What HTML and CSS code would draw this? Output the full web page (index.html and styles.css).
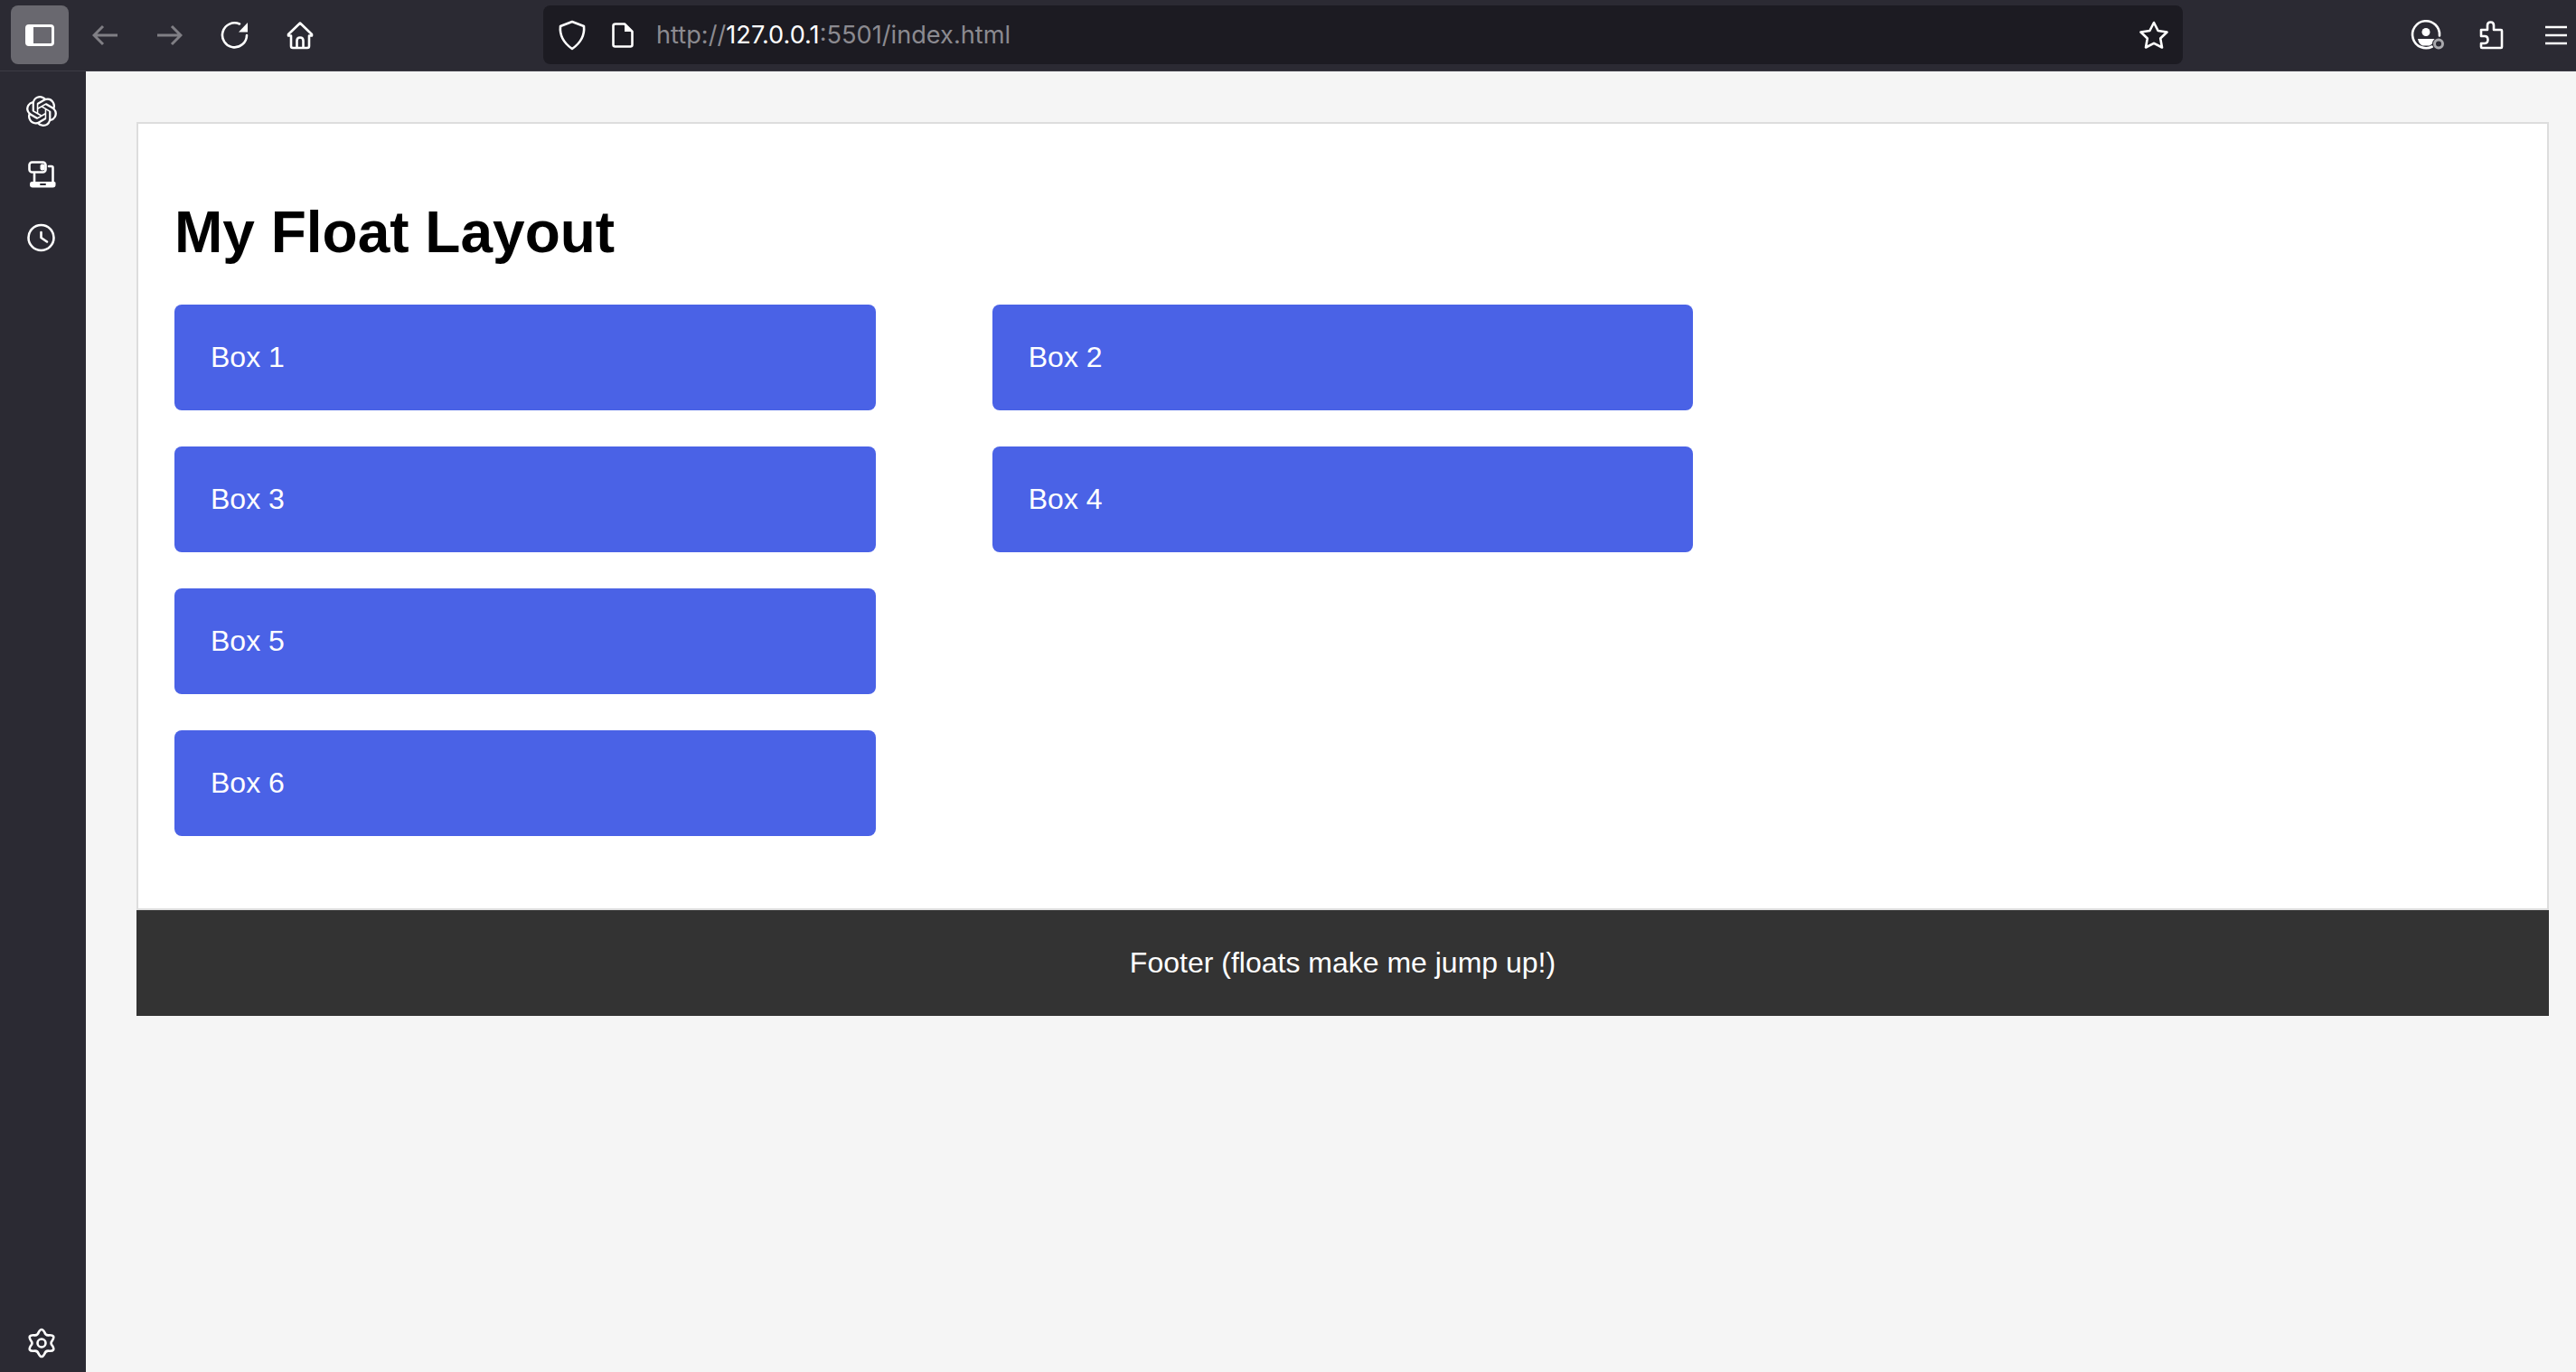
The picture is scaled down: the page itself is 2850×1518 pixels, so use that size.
FILE: index.html
```html
<!DOCTYPE html>
<html lang="en">
<head>
    <meta charset="UTF-8">
    <title>My Float Layout</title>
    <link rel="stylesheet" href="styles.css">
</head>
<body>
    <header class="toolbar">
        <div class="tool-btn tool-btn-active">
            <svg width="32" height="24" viewBox="0 0 32 24"><rect x="1.500" y="1.500" width="29" height="21" rx="2.500" fill="none" stroke="#fff" stroke-width="3"/><rect x="1" y="1" width="8" height="22" rx="2" fill="#fff"/></svg>
        </div>
        <div class="tool-btn">
            <svg width="28" height="24" viewBox="0 0 28 24" class="icon-dim"><path d="M28 12H3M12 2 2 12l10 10"/></svg>
        </div>
        <div class="tool-btn">
            <svg width="28" height="24" viewBox="0 0 28 24" class="icon-dim"><path d="M0 12h25M16 2l10 10-10 10"/></svg>
        </div>
        <div class="tool-btn">
            <svg width="32" height="32" viewBox="0 0 32 32" class="icon"><path d="M29 16A13.500 13.500 0 1 1 21 3.500"/><path d="M30 2v10.500H20z" class="icon-fill"/></svg>
        </div>
        <div class="tool-btn">
            <svg width="32" height="32" viewBox="0 0 32 32" class="icon"><path d="M16 2.500 3 15v1.500h3V28q0 2 2 2h16q2 0 2-2V16.500h3V15zM12.500 30v-8q0-3.500 3.500-3.500t3.500 3.500v8"/></svg>
        </div>

        <div class="urlbar">
            <svg width="32" height="34" viewBox="0 0 32 34" class="icon"><path d="M16 2 29 7q1.500 15-13 25Q1.500 22 3 7z"/></svg>
            <svg width="24" height="28" viewBox="0 0 24 28" class="icon url-page"><path d="M4 1.500h10l8.500 8.500v14.500q0 2-2 2H3.500q-2 0-2-2v-21q0-2 2.500-2z"/><path d="M14 2l8 8h-8z" class="icon-fill"/></svg>
            <span class="url-text">http://<span class="url-host">127.0.0.1</span>:5501/index.html</span>
            <svg width="32" height="32" viewBox="0 0 32 32" class="icon url-star"><path d="M16 2l4.600 9 9.900 1.500-7.300 7 1.800 10-9-4.700-9 4.700 1.800-10-7.300-7L11.400 11z"/></svg>
        </div>

        <div class="tool-btn">
            <svg width="40" height="40" viewBox="0 0 40 40" class="icon"><path d="M27 32.500A15 15 0 1 1 35 20.500"/><circle cx="20" cy="16.500" r="4.500" class="icon-fill"/><path d="M11 24h19q-1 5-6 7.500h-8q-4-2-5-7.500z" class="icon-fill"/><circle cx="34" cy="29.500" r="7" fill="#2b2a33" stroke="none"/><circle cx="34" cy="29.500" r="4.500" fill="none" stroke="#a9a9ad" stroke-width="3"/></svg>
        </div>
        <div class="tool-btn">
            <svg width="28" height="34" viewBox="0 0 28 34" class="icon"><path d="M3 11h7V6q0-3.500 3.500-3.500T17 6v5h8q1 0 1 1v18q0 1-1 1H4q-1 0-1-1v-4h4q3.500 0 3.500-4T7 18H3z"/></svg>
        </div>
        <div class="tool-btn">
            <svg width="24" height="22" viewBox="0 0 24 22" class="icon icon-square"><path d="M0 2h24M0 11h24M0 20h24"/></svg>
        </div>
    </header>

    <div class="app">
        <nav class="sidebar">
            <div class="side-btn">
                <svg width="34" height="34" viewBox="0 0 24 24" fill="#fff"><path d="M22.2819 9.8211a5.9847 5.9847 0 0 0-.5157-4.9108 6.0462 6.0462 0 0 0-6.5098-2.9A6.0651 6.0651 0 0 0 4.9807 4.1818a5.9847 5.9847 0 0 0-3.9977 2.9 6.0462 6.0462 0 0 0 .7427 7.0966 5.98 5.98 0 0 0 .511 4.9107 6.051 6.051 0 0 0 6.5146 2.9001A5.9847 5.9847 0 0 0 13.2599 24a6.0557 6.0557 0 0 0 5.7718-4.2058 5.9894 5.9894 0 0 0 3.9977-2.9001 6.0557 6.0557 0 0 0-.7475-7.0729zm-9.022 12.6081a4.4755 4.4755 0 0 1-2.8764-1.0408l.1419-.0804 4.7783-2.7582a.7948.7948 0 0 0 .3927-.6813v-6.7369l2.02 1.1686a.071.071 0 0 1 .038.052v5.5826a4.504 4.504 0 0 1-4.4945 4.4944zm-9.6607-4.1254a4.4708 4.4708 0 0 1-.5346-3.0137l.142.0852 4.783 2.7582a.7712.7712 0 0 0 .7806 0l5.8428-3.3685v2.3324a.0804.0804 0 0 1-.0332.0615L9.74 19.9502a4.4992 4.4992 0 0 1-6.1408-1.6464zM2.3408 7.8956a4.485 4.485 0 0 1 2.3655-1.9728V11.6a.7664.7664 0 0 0 .3879.6765l5.8144 3.3543-2.0201 1.1685a.0757.0757 0 0 1-.071 0l-4.8303-2.7865A4.504 4.504 0 0 1 2.3408 7.872zm16.5963 3.8558L13.1038 8.364 15.1192 7.2a.0757.0757 0 0 1 .071 0l4.8303 2.7913a4.4944 4.4944 0 0 1-.6765 8.1042v-5.6772a.79.79 0 0 0-.407-.667zm2.0107-3.0231l-.142-.0852-4.7735-2.7818a.7759.7759 0 0 0-.7854 0L9.409 9.2297V6.8974a.0662.0662 0 0 1 .0284-.0615l4.8303-2.7866a4.4992 4.4992 0 0 1 6.6802 4.66zM8.3065 12.863l-2.02-1.1638a.0804.0804 0 0 1-.038-.0567V6.0742a4.4992 4.4992 0 0 1 7.3757-3.4537l-.142.0805L8.704 5.459a.7948.7948 0 0 0-.3927.6813zm1.0976-2.3654l2.602-1.4998 2.6069 1.4998v2.9994l-2.5974 1.4997-2.6067-1.4997Z"/></svg>
            </div>
            <div class="side-btn">
                <svg width="32" height="32" viewBox="0 0 32 32" class="icon"><rect x="2.500" y="2.500" width="18" height="11" rx="3"/><rect x="14.500" y="4.500" width="5" height="7" rx="2" class="icon-fill"/><path d="M24 7h3q1.500 0 1.500 1.500V24M8 15v9"/><path d="M5 24h25q1.500 0 1.500 1.500v2q0 3-3 3H6q-3 0-3-3v-1q0-2.500 2-2.500z" class="icon-fill"/><path d="M15 27h5" stroke="#2b2a33" stroke-width="2"/></svg>
            </div>
            <div class="side-btn">
                <svg width="32" height="32" viewBox="0 0 32 32" class="icon"><circle cx="15.500" cy="16" r="14"/><path d="M15.500 10v6l6.500 4.500"/></svg>
            </div>
            <div class="side-btn side-settings">
                <svg width="34" height="34" viewBox="-1 -1 34 34" class="icon"><path d="M12.800 3.900Q16-2 19.200 3.900 20.500 8.200 24.800 7.200 31.600 7 28.100 12.800 25 16 28.100 19.200 31.600 25 24.800 24.800 20.500 23.800 19.200 28.100 16 34 12.800 28.100 11.500 23.800 7.200 24.800.4 25 3.900 19.200 7 16 3.900 12.800.4 7 7.200 7.200 11.500 8.200 12.800 3.900Z"/><circle cx="16" cy="16" r="4.500"/></svg>
            </div>
        </nav>

        <main class="page">
            <div class="container">
                <h1>My Float Layout</h1>
                <div class="boxes">
                    <div class="box">Box 1</div>
                    <div class="box">Box 2</div>
                    <div class="box">Box 3</div>
                    <div class="box">Box 4</div>
                    <div class="box box-first">Box 5</div>
                    <div class="box box-first">Box 6</div>
                </div>
            </div>
            <footer class="footer">Footer (floats make me jump up!)</footer>
        </main>
    </div>
</body>
</html>
```
FILE: styles.css
```css
* {
    box-sizing: border-box;
}
body {
    font-family: "Liberation Sans", Arial, sans-serif;
    font-size: 32px;
    margin: 0;
    height: 100vh;
    display: flex;
    flex-direction: column;
    overflow: hidden;
    background-color: #2b2a33;
}

/* barra del navegador */
.toolbar {
    flex: none;
    height: 79px;
    margin-right: -10px; /* el menu queda cortado por la ventana */
    padding: 6px 0 7px 12px;
    display: flex;
    gap: 8px;
    border-bottom: 1px solid #3c3b45;
}
.tool-btn {
    flex: none;
    width: 64px;
    display: flex;
    align-items: center;
    justify-content: center;
    border-radius: 8px;
}
.tool-btn-active {
    background-color: #69686f;
}
.icon,
.icon-dim {
    fill: none;
    stroke: #fff;
    stroke-width: 2.6;
    stroke-linecap: round;
    stroke-linejoin: round;
}
.icon-dim {
    stroke: #807f85;
    stroke-width: 3;
    stroke-linecap: butt;
    stroke-linejoin: miter;
}
.icon-square {
    stroke-linecap: butt;
}
.icon .icon-fill {
    fill: #fff;
    stroke: none;
}

.urlbar {
    flex: 1;
    min-width: 0;
    margin: 0 229px;
    padding: 0 16px;
    display: flex;
    align-items: center;
    background-color: #1c1b22;
    border-radius: 8px;
}
.url-page {
    margin-left: 28px;
}
.url-text {
    margin-left: 25px;
    font-family: Inter, "Liberation Sans", sans-serif;
    font-size: 27.2px;
    color: #8b8a90;
}
.url-host {
    color: #fff;
}
.url-star {
    margin-left: auto;
}

/* barra lateral */
.app {
    flex: 1;
    min-height: 0;
    display: flex;
}
.sidebar {
    flex: none;
    width: 95px;
    padding: 26px 4px 14px 0;
    display: flex;
    flex-direction: column;
    align-items: center;
    gap: 34px;
}
.side-btn {
    height: 36px;
    display: flex;
    align-items: center;
    justify-content: center;
}
.side-settings {
    margin-top: auto;
}

/* pagina */
.page {
    flex: 1;
    min-width: 0;
    padding: 56px 30px 0 56px;
    background-color: #f5f5f5;
}
.container {
    padding: 40px;
    background-color: #fff;
    border: 2px solid #ddd;
}
h1 {
    font-size: 64px;
}
.boxes {
    display: grid;
    grid-template-columns: 30% 30%;
    column-gap: 5%;
    row-gap: 40px;
    margin-bottom: 40px;
}
.box {
    padding: 40px;
    background-color: #4a62e6;
    color: #fff;
    border-radius: 8px;
}
.box-first {
    grid-column: 1;
}
.footer {
    padding: 40px;
    background-color: #333;
    color: #fff;
    text-align: center;
}
```
